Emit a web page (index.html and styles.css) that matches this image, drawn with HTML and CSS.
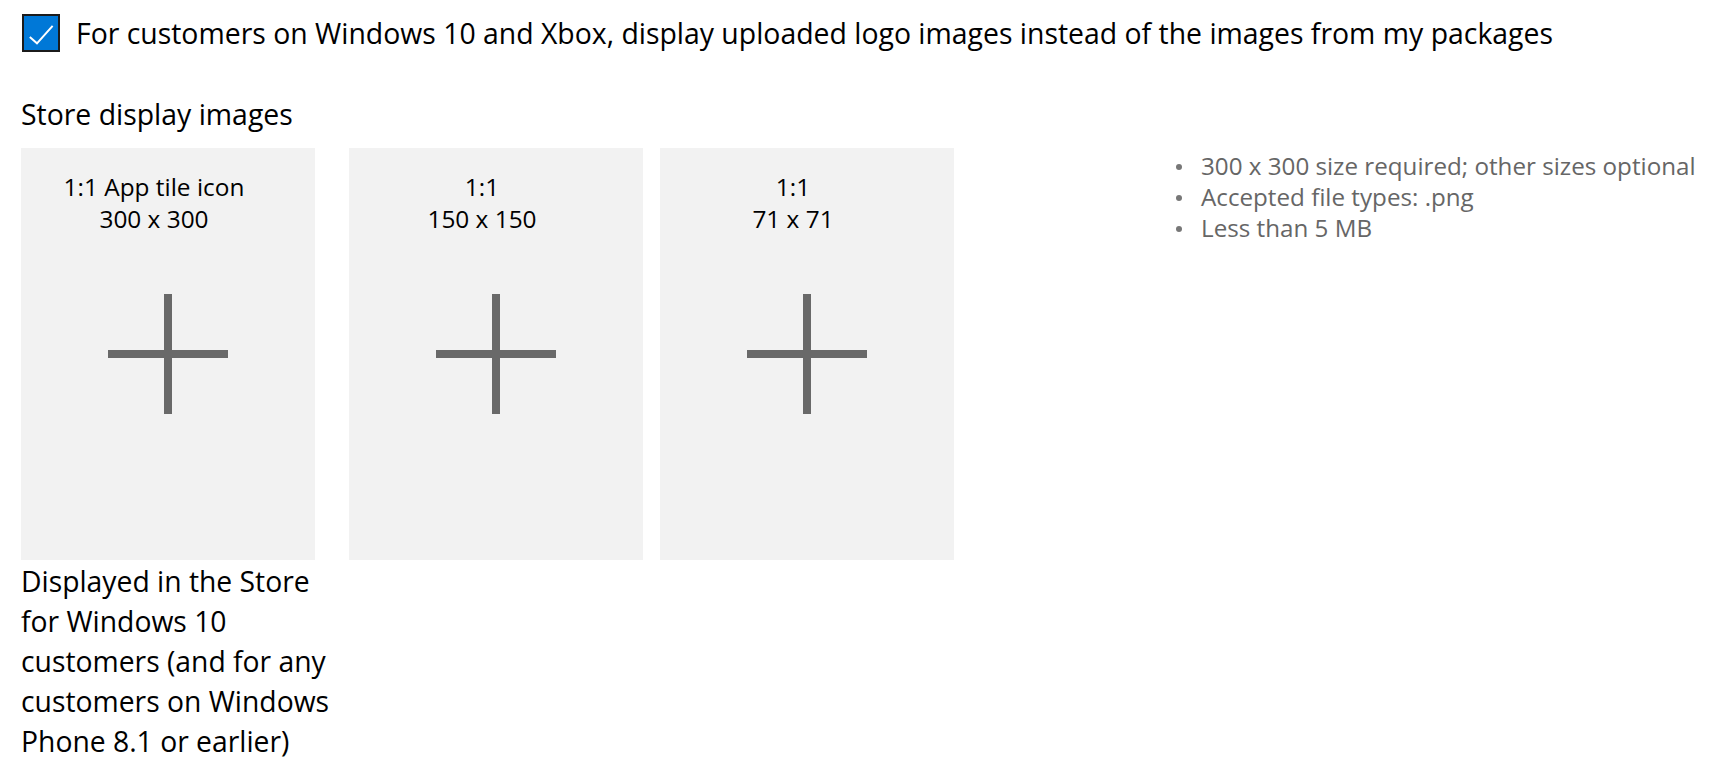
FILE: index.html
```html
<!DOCTYPE html>
<html lang="en">
<head>
<meta charset="utf-8">
<title>Store display images</title>
<link rel="stylesheet" href="styles.css">
</head>
<body>
<main class="page">
  <label class="check-row">
    <span class="checkbox">
      <svg viewBox="0 0 38 38" width="38" height="38" aria-hidden="true">
        <polyline points="6.5,23.5 14.5,30.5 32,11" fill="none" stroke="#ffffff" stroke-width="2.2"/>
      </svg>
    </span>
    <span class="check-label">For customers on Windows 10 and Xbox, display uploaded logo images instead of the images from my packages</span>
  </label>

  <h2 class="section-title">Store display images</h2>

  <div class="images-row">
    <div class="image-col image-col--wide">
      <div class="tile">
        <div class="tile-label">1:1 App tile icon<br>300 x 300</div>
        <svg class="plus" viewBox="0 0 120 120" width="120" height="120" aria-hidden="true">
          <rect x="56" y="0" width="8" height="120"/>
          <rect x="0" y="56" width="120" height="8"/>
        </svg>
      </div>
      <p class="tile-desc">Displayed in the Store for Windows 10 customers (and for any customers on Windows Phone 8.1 or earlier)</p>
    </div>
    <div class="image-col">
      <div class="tile">
        <div class="tile-label">1:1<br>150 x 150</div>
        <svg class="plus" viewBox="0 0 120 120" width="120" height="120" aria-hidden="true">
          <rect x="56" y="0" width="8" height="120"/>
          <rect x="0" y="56" width="120" height="8"/>
        </svg>
      </div>
    </div>
    <div class="image-col">
      <div class="tile">
        <div class="tile-label">1:1<br>71 x 71</div>
        <svg class="plus" viewBox="0 0 120 120" width="120" height="120" aria-hidden="true">
          <rect x="56" y="0" width="8" height="120"/>
          <rect x="0" y="56" width="120" height="8"/>
        </svg>
      </div>
    </div>

    <ul class="requirements">
      <li><span class="dot"></span>300 x 300 size required; other sizes optional</li>
      <li><span class="dot"></span>Accepted file types: .png</li>
      <li><span class="dot"></span>Less than 5 MB</li>
    </ul>
  </div>
</main>
</body>
</html>
```

FILE: styles.css
```css
html, body {
  margin: 0;
  padding: 0;
  background: #ffffff;
}

body {
  font-family: "Open Sans", "Noto Sans", sans-serif;
  color: #000000;
}

.page {
  padding: 14px 0 0 22px;
}

.check-row {
  display: flex;
  align-items: center;
  gap: 16px;
  height: 38px;
}

.checkbox {
  box-sizing: border-box;
  width: 38px;
  height: 38px;
  background: #0078d7;
  border: 2px solid #1b1b1b;
  display: flex;
  align-items: center;
  justify-content: center;
  flex: none;
}

.checkbox svg {
  display: block;
  width: 34px;
  height: 34px;
}

.check-label {
  font-size: 28.4px;
  line-height: 38px;
  white-space: nowrap;
}

.section-title {
  margin: 43px 0 0 -1px;
  font-size: 28.4px;
  line-height: 38px;
  font-weight: 400;
}

.images-row {
  display: flex;
  align-items: flex-start;
  margin-top: 15px;
  margin-left: -1px;
}

.image-col {
  width: 294px;
  margin-right: 17px;
  flex: none;
}

.image-col--wide {
  width: 311px;
}

.tile {
  width: 294px;
  height: 412px;
  background: #f2f2f2;
  display: grid;
}

.tile-label,
.plus {
  grid-area: 1 / 1;
}

.tile-label {
  align-self: start;
  padding: 23px 28px 0 0;
  text-align: center;
  font-size: 24.4px;
  line-height: 32px;
}

.plus {
  align-self: center;
  justify-self: center;
  fill: #696969;
}

.tile-desc {
  margin: 1px 0 0;
  font-size: 28.3px;
  line-height: 40px;
}

.requirements {
  list-style: none;
  margin: 2px 0 0 205px;
  padding: 0;
  font-size: 24.2px;
  line-height: 31px;
  color: #666666;
}

.requirements li {
  display: flex;
  align-items: center;
  white-space: nowrap;
}

.dot {
  width: 6px;
  height: 6px;
  border-radius: 50%;
  background: #777777;
  margin: 2px 19px 0 0;
  flex: none;
}
```
